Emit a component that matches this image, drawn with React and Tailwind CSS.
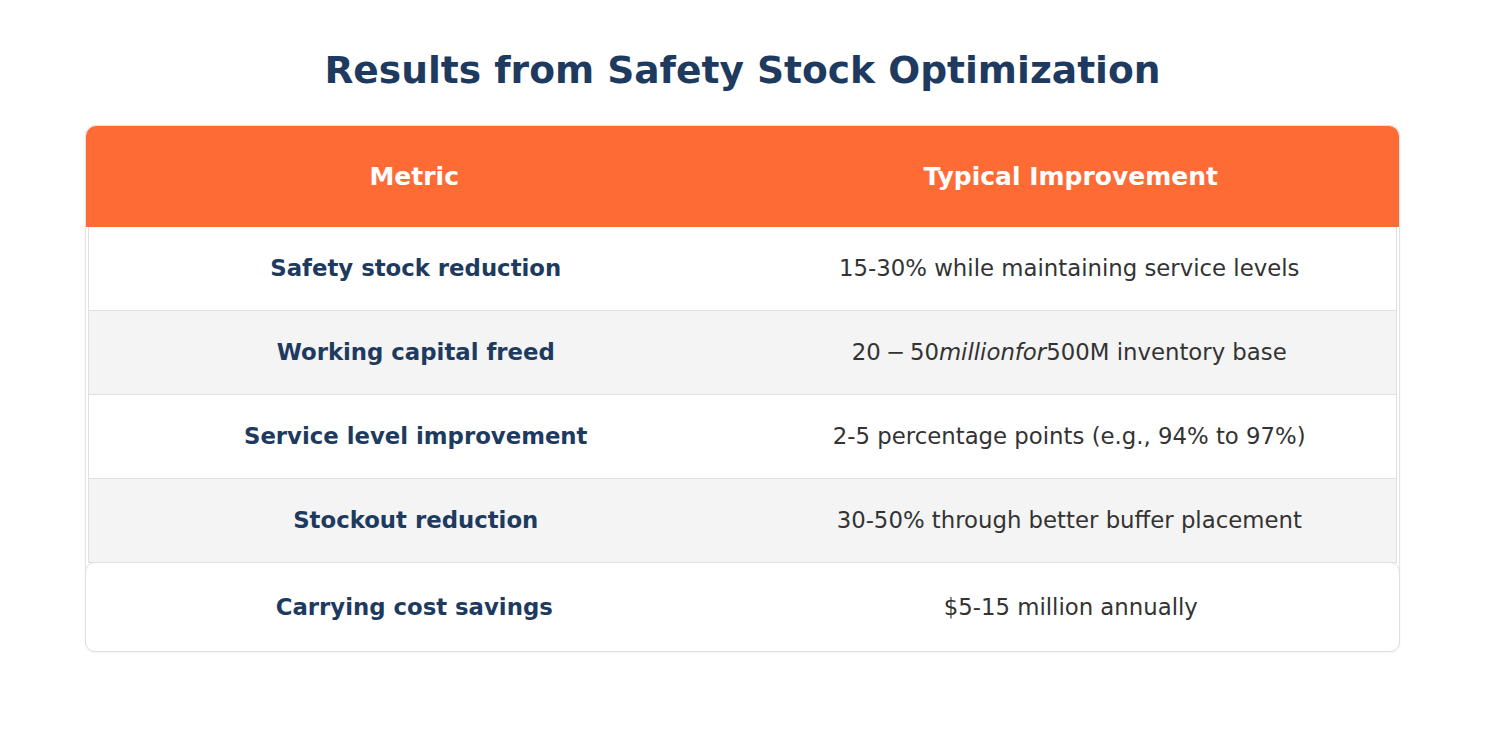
import React from 'react';

const rows = [
  { metric: 'Safety stock reduction', value: '15-30% while maintaining service levels' },
  {
    metric: 'Working capital freed',
    value: (
      <>
        20<span className="mx-[5px]">−</span>50<span className="italic">millionfor</span>500M inventory base
      </>
    ),
  },
  { metric: 'Service level improvement', value: '2-5 percentage points (e.g., 94% to 97%)' },
  { metric: 'Stockout reduction', value: '30-50% through better buffer placement' },
];

export default function App() {
  return (
    <div className="min-h-[735px] w-full bg-white font-['DejaVu_Sans',sans-serif] pt-[46px]">
      <h1 className="text-center text-[37.6px] leading-[48px] font-bold text-[#1e3a5f]">
        Results from Safety Stock Optimization
      </h1>

      {/* Table */}
      <div className="mx-[85px] mt-[31px] rounded-[10px] border border-[#e3e3e3] shadow-[0_1px_3px_rgba(0,0,0,0.05)]">
        <div className="grid grid-cols-2 h-[101px] items-center rounded-t-[10px] bg-[#ff6b35] text-[25px] font-bold text-white">
          <div className="text-center">Metric</div>
          <div className="text-center">Typical Improvement</div>
        </div>

        {rows.map((r, i) => (
          <div
            key={i}
            className={`mx-[2px] grid grid-cols-2 h-[84px] items-center border-x border-b border-[#e0e0e0] text-[22.8px] ${
              i % 2 === 1 ? 'bg-[#f4f4f4]' : 'bg-white'
            }`}
          >
            <div className="text-center font-bold text-[#1e3a5f]">{r.metric}</div>
            <div className="text-center text-[#333333]">{r.value}</div>
          </div>
        ))}

        {/* last row sits on its own rounded card */}
        <div className="-mx-px -mb-px -mt-px grid grid-cols-2 h-[90px] items-center rounded-[10px] border border-[#e0e0e0] bg-white text-[22.8px]">
          <div className="text-center font-bold text-[#1e3a5f]">Carrying cost savings</div>
          <div className="text-center text-[#333333]">$5-15 million annually</div>
        </div>
      </div>
    </div>
  );
}
